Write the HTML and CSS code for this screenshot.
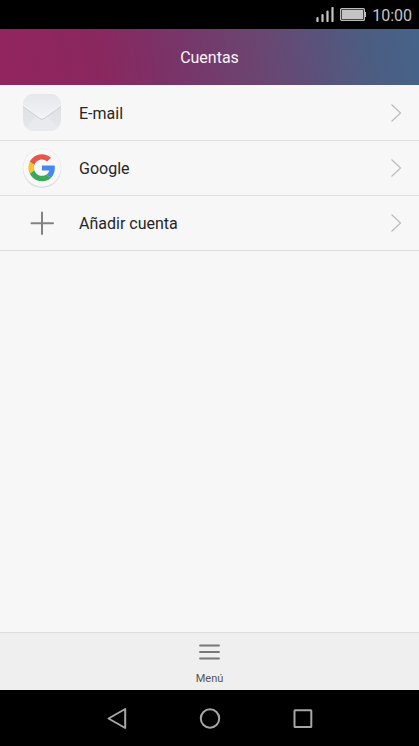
FILE: index.html
```html
<!DOCTYPE html>
<html lang="es">
<head>
<meta charset="utf-8">
<meta name="viewport" content="width=device-width, initial-scale=1">
<title>Cuentas</title>
<link rel="stylesheet" href="styles.css">
</head>
<body>
<div class="status-bar">
  <svg class="signal" width="18" height="15" viewBox="0 0 18 15" aria-hidden="true">
    <path d="M1.5 11v3M6.5 8v6M11.5 4.500v9.500M16.500 1v13" fill="none" stroke="#c4c4c4" stroke-width="2.200" stroke-linecap="round"/>
  </svg>
  <svg class="battery" width="27" height="13" viewBox="0 0 27 13" aria-hidden="true">
    <rect x=".6" y=".6" width="23.800" height="11.800" rx="1" fill="#222" stroke="#bebebe" stroke-width="1.200"/>
    <rect x="2" y="2" width="21" height="9" fill="#c4c4c4"/>
    <path d="M25 4h1v5h-1z" fill="#bebebe"/>
  </svg>
  <time class="clock">10:00</time>
</div>
<header class="title-bar"><h1>Cuentas</h1></header>
<main class="content">
  <ul class="accounts">
    <li><a class="account" href="#email">
      <svg class="account-icon" width="40" height="40" viewBox="0 0 40 40" aria-hidden="true">
        <defs>
          <linearGradient id="paper" x1="0" y1="0" x2="0" y2="1"><stop offset="0" stop-color="#e5e7ea"/><stop offset="1" stop-color="#f2f3f6"/></linearGradient>
          <linearGradient id="body" x1="0" y1="0" x2="0" y2="1"><stop offset="0" stop-color="#dcdde0"/><stop offset="1" stop-color="#e7e8ec"/></linearGradient>
          <clipPath id="tile"><rect x="1" y="1" width="38" height="37" rx="11"/></clipPath>
        </defs>
        <g clip-path="url(#tile)">
          <path d="M0 0h40v40H0z" fill="url(#body)"/>
          <path d="M0 39 15 23h10l15 16z" fill="#e9eaee"/>
          <path d="M0 12 17.500 25q2.500 2 5 0L40 12" fill="none" stroke="#d0d2d6" stroke-width="1.500"/>
          <path d="M0 0h40v11.500L22 24.500q-2 1.500-4 0L0 11.500z" fill="url(#paper)"/>
          <path d="M0 11.500 18 24.500q2 1.500 4 0L40 11.500" fill="none" stroke="#fafbfc" stroke-width=".8"/>
        </g>
      </svg>
      <span class="account-name">E-mail</span>
      <svg class="chevron" width="12" height="20" viewBox="0 0 12 20" aria-hidden="true"><path d="m1.500 1.500 9 8.500-9 8.500"/></svg>
    </a></li>
    <li><a class="account" href="#google">
      <svg class="account-icon" width="40" height="40" viewBox="0 0 40 40" aria-hidden="true">
        <circle cx="20" cy="20.800" r="19" fill="#cdcdcd"/>
        <circle cx="20" cy="20" r="19.300" fill="#e5e5e5"/>
        <circle cx="20" cy="19.700" r="18.700" fill="#f8f8f8"/>
        <g transform="translate(6.400 6.200) scale(.5625)">
          <path fill="#e8554a" d="M24 9.500c3.540 0 6.710 1.220 9.210 3.600l6.850-6.850C35.900 2.380 30.470 0 24 0 14.620 0 6.510 5.380 2.560 13.220l7.980 6.190C12.430 13.720 17.740 9.500 24 9.500z"/>
          <path fill="#4688ee" d="M46.980 24.550c0-1.570-.15-3.090-.38-4.550H24v9.020h12.940c-.58 2.960-2.260 5.480-4.780 7.180l7.730 6c4.510-4.180 7.090-10.360 7.090-17.650z"/>
          <path fill="#fac32d" d="M10.530 28.590c-.48-1.450-.76-2.990-.76-4.590s.27-3.140.76-4.590l-7.980-6.190C.92 16.460 0 20.120 0 24c0 3.880.92 7.540 2.560 10.780z"/>
          <path fill="#3da859" d="M24 48c6.480 0 11.930-2.130 15.890-5.810l-7.730-6c-2.150 1.450-4.920 2.300-8.160 2.300-6.260 0-11.570-4.220-13.470-9.910l-7.980 6.190C6.510 42.620 14.620 48 24 48z"/>
        </g>
      </svg>
      <span class="account-name">Google</span>
      <svg class="chevron" width="12" height="20" viewBox="0 0 12 20" aria-hidden="true"><path d="m1.500 1.500 9 8.500-9 8.500"/></svg>
    </a></li>
    <li><a class="account" href="#add">
      <svg class="account-icon" width="40" height="40" viewBox="0 0 40 40" aria-hidden="true">
        <path d="M20 9.500v21.500M9.500 20.300h21.500" fill="none" stroke="#828282" stroke-width="2" stroke-linecap="round"/>
      </svg>
      <span class="account-name">Añadir cuenta</span>
      <svg class="chevron" width="12" height="20" viewBox="0 0 12 20" aria-hidden="true"><path d="m1.500 1.500 9 8.500-9 8.500"/></svg>
    </a></li>
  </ul>
</main>
<footer class="toolbar">
  <button class="menu-button" type="button">
    <svg width="21" height="16" viewBox="0 0 21 16" aria-hidden="true"><path d="M1 1.500h19M1 8h19M1 14.500h19" fill="none" stroke="#777" stroke-width="1.800" stroke-linecap="round"/></svg>
    <span>Menú</span>
  </button>
</footer>
<nav class="system-nav" aria-label="Sistema">
  <button type="button" aria-label="Atrás"><svg width="25" height="25" viewBox="0 0 25 25"><path d="M21.200 3v19L4.500 12.500z"/></svg></button>
  <button type="button" aria-label="Inicio"><svg width="25" height="25" viewBox="0 0 25 25"><circle cx="13" cy="12.500" r="9.200"/></svg></button>
  <button type="button" aria-label="Recientes"><svg width="25" height="25" viewBox="0 0 25 25"><rect x="4.500" y="4.300" width="16.800" height="16.800" rx=".5"/></svg></button>
</nav>
</body>
</html>
```
FILE: styles.css
```css
* {
  box-sizing: border-box;
}

body {
  margin: 0;
  min-height: 100vh;
  display: flex;
  flex-direction: column;
  background: #f7f7f7;
  color: #262626;
  font-family: Roboto, "Liberation Sans", sans-serif;
}

button {
  padding: 0;
  border: 0;
  background: none;
  color: inherit;
  font: inherit;
}

svg {
  display: block;
  flex: none;
}

.status-bar {
  height: 29px;
  padding: 0 7px;
  display: flex;
  align-items: center;
  justify-content: flex-end;
  background: #000;
  color: #c4c4c4;
}

.battery {
  margin: 0 5px 0 6px;
}

.clock {
  padding-top: 2px;
  font-size: 16px;
  line-height: 20px;
}

.title-bar {
  height: 56px;
  display: flex;
  align-items: center;
  justify-content: center;
  background: linear-gradient(80deg, #92245f 0%, #8a275f 24%, #783569 43%, #6c4470 60%, #5c507a 74%, #4d5d82 87%, #456389 100%);
  color: #fbf4f8;
}

.title-bar h1 {
  margin: 0;
  padding-top: 2px;
  font-size: 16px;
  font-weight: 400;
  line-height: 20px;
}

.content {
  flex: 1;
}

.accounts {
  margin: 0;
  padding: 1px 0 0;
  list-style: none;
}

.account {
  height: 55px;
  padding: 0 17px 0 22px;
  display: flex;
  align-items: center;
  border-bottom: 1px solid #dedede;
  color: inherit;
  text-decoration: none;
}

.account-name {
  flex: 1;
  margin-left: 17px;
  padding-top: 2px;
  font-size: 16px;
  line-height: 20px;
}

.chevron {
  fill: none;
  stroke: #bcbcbc;
  stroke-width: 1.2px;
}

.toolbar {
  height: 58px;
  display: flex;
  justify-content: center;
  border-top: 1px solid #dcdcdc;
  background: #efefef;
}

.menu-button {
  width: 93px;
  padding-top: 11px;
  display: flex;
  flex-direction: column;
  align-items: center;
  gap: 12px;
  color: #555;
  font-size: 11px;
  line-height: 14px;
}

.system-nav {
  height: 56px;
  display: grid;
  grid-template-columns: repeat(3, 93px);
  justify-content: center;
  background: #000;
}

.system-nav button {
  display: flex;
  align-items: center;
  justify-content: center;
}

.system-nav svg {
  fill: none;
  stroke: #a6a6a6;
  stroke-width: 2px;
  stroke-linejoin: round;
}
```
